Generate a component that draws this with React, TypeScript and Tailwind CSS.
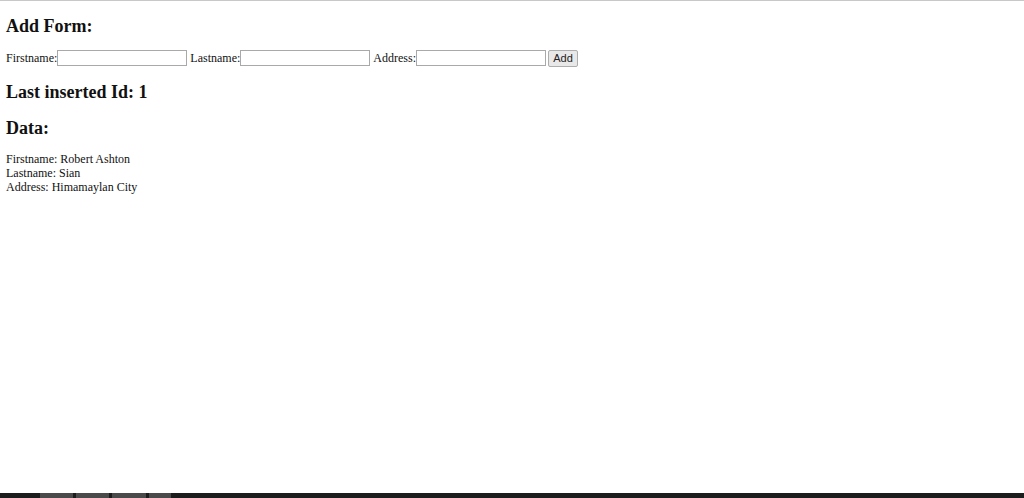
export default function App() {
  return (
    <div className="flex h-[498px] w-[1024px] flex-col bg-white font-['Liberation_Serif',serif] text-[12px] text-[#111]">
      <div className="h-px w-full bg-[#c8c8c8]" />
      <div className="flex flex-1 flex-col px-[6px]">
        <h2 className="mt-[15px] text-[18px] font-bold leading-[21px]">Add Form:</h2>
        <form className="mt-[13px] flex h-[16px] items-center" onSubmit={(e) => e.preventDefault()}>
          <label className="leading-[14px]">Firstname:</label>
          <input className="h-[16px] w-[130px] border border-[#a9a9a9] bg-white" />
          <label className="ml-[3px] leading-[14px]">Lastname:</label>
          <input className="h-[16px] w-[130px] border border-[#a9a9a9] bg-white" />
          <label className="ml-[3px] leading-[14px]">Address:</label>
          <input className="h-[16px] w-[130px] border border-[#a9a9a9] bg-white" />
          <button
            type="submit"
            className="ml-[2px] h-[17px] w-[30px] rounded-[2px] border border-[#adadad] bg-[#e8e8e8] font-['Liberation_Sans',sans-serif] text-[11px] leading-[15px] text-[#222]"
          >
            Add
          </button>
        </form>
        <h2 className="mt-[16px] text-[18px] font-bold leading-[21px]">Last inserted Id: 1</h2>
        <h2 className="mt-[15px] text-[18px] font-bold leading-[21px]">Data:</h2>
        <div className="mt-[13px] flex flex-col leading-[14px]">
          <span>Firstname: Robert Ashton</span>
          <span>Lastname: Sian</span>
          <span>Address: Himamaylan City</span>
        </div>
      </div>
      <div className="flex h-[5px] w-full items-end bg-[#1c1c1c] pl-[40px]">
        <div className="flex h-[5px] gap-[3px]">
          <div className="h-full w-[33px] bg-[#4a4a4a]" />
          <div className="h-full w-[33px] bg-[#4a4a4a]" />
          <div className="h-full w-[34px] bg-[#4a4a4a]" />
          <div className="h-full w-[22px] bg-[#4a4a4a]" />
        </div>
      </div>
    </div>
  );
}
